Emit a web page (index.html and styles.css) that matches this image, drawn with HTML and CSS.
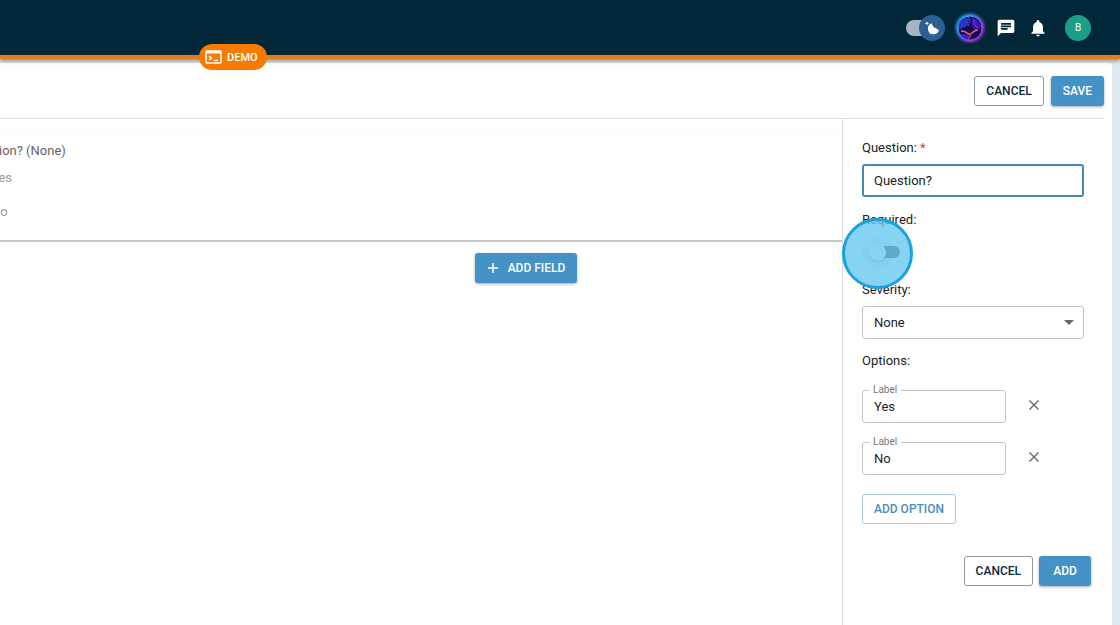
FILE: index.html
```html
<!DOCTYPE html>
<html lang="en">
<head>
  <meta charset="utf-8">
  <title>Form Builder</title>
  <link rel="stylesheet" href="styles.css">
</head>
<body>

<header class="topbar">
  <a class="demo-badge" href="#">
    <svg width="17" height="14" viewBox="0 0 17 14" fill="none" stroke="#fff" stroke-width="1.5">
      <rect x="1" y="1" width="15" height="12" rx="1"/>
      <path d="M1 2.5h15" stroke-width="2"/>
      <path d="M4 6l2.5 2L4 10M8.5 10.5H13"/>
    </svg>
    DEMO
  </a>
  <label class="theme-switch">
    <input type="checkbox" aria-label="Dark mode" checked>
    <span class="theme-thumb">
      <svg width="16" height="16" viewBox="0 0 16 16" fill="#fff">
        <path d="M8.200 3.200A5.600 5.600 0 1 0 15 9.800a2.600 2.600 0 0 1-3-2 2.600 2.600 0 0 1-3-1.800 2.600 2.600 0 0 1-.8-2.800z"/>
        <path d="M3 1.200l.6 1.600 1.600.6-1.600.6L3 5.600 2.400 4 .8 3.400l1.600-.6z"/>
      </svg>
    </span>
  </label>
  <button class="icon-btn" aria-label="Assistant">
    <svg width="36" height="36" viewBox="0 0 36 36">
      <defs>
        <linearGradient id="ring" x1="0" y1="0" x2="1" y2="1">
          <stop offset="0" stop-color="#22d3ff"/>
          <stop offset=".4" stop-color="#4a8cff"/>
          <stop offset=".7" stop-color="#c03cf0"/>
          <stop offset="1" stop-color="#8a2cf0"/>
        </linearGradient>
        <filter id="soft" x="-20%" y="-20%" width="140%" height="140%"><feGaussianBlur stdDeviation="1.500"/></filter>
        <clipPath id="orb"><circle cx="18" cy="18" r="12"/></clipPath>
      </defs>
      <circle cx="18" cy="18" r="14" fill="url(#ring)" filter="url(#soft)"/>
      <circle cx="18" cy="18" r="12" fill="#150a50" stroke="url(#ring)"/>
      <g clip-path="url(#orb)" fill="none">
        <path d="M6 12q5-6 11-3l-1 6-9 5z" fill="#2338c8"/>
        <path d="M20 8q7 1 9 9l-5 4-4-5z" fill="#3a1bb8"/>
        <path d="M10 24l8 1-2 5-6-2z" fill="#2b2ad0"/>
        <path d="M16 7q4 4 0 9M22 9q-1 6 4 9" stroke="#6a3aff"/>
        <path d="M9 21q4 0 6 2t5 0q3-3 6-3" stroke="#f0685c" stroke-width="1.500"/>
        <path d="M19 24q0 3-3 5" stroke="#d0508c"/>
      </g>
    </svg>
  </button>
  <button class="icon-btn" aria-label="Messages">
    <svg width="20" height="20" viewBox="0 0 24 24" fill="#fff"><path d="M20 2H4c-1.100 0-2 .9-2 2v18l4-4h14c1.100 0 2-.9 2-2V4c0-1.100-.9-2-2-2zM6 6h12v2H6zm0 3h12v2H6zm8 5H6v-2h8z"/></svg>
  </button>
  <button class="icon-btn" aria-label="Notifications">
    <svg width="20" height="20" viewBox="0 0 24 24" fill="#fff"><path d="M12 22c1.100 0 2-.9 2-2h-4c0 1.100.9 2 2 2zm6-6v-5c0-3.070-1.640-5.640-4.500-6.320V4c0-.83-.67-1.500-1.500-1.500s-1.500.67-1.500 1.500v.68C7.630 5.360 6 7.920 6 11v5l-2 2v1h16v-1z"/></svg>
  </button>
  <button class="avatar">B</button>
</header>

<main class="page">
  <div class="toolbar">
    <button class="btn btn-outline">CANCEL</button>
    <button class="btn btn-primary">SAVE</button>
  </div>

  <div class="editor">
    <section class="builder">
      <div class="field-preview">
        <p class="field-title">Question? (None)</p>
        <p class="field-option">Yes</p>
        <p class="field-option">No</p>
      </div>
      <div class="builder-actions">
        <button class="btn btn-primary">
          <svg width="12" height="12" viewBox="0 0 12 12" stroke="#fff" stroke-width="1.500"><path d="M6 1v10M1 6h10"/></svg>
          ADD FIELD
        </button>
      </div>
    </section>

    <form class="settings">
      <label class="field-label" for="question">Question: <span class="required">*</span></label>
      <input class="text-input focused" type="text" id="question" value="Question?">

      <label class="field-label" for="required">Required:</label>
      <div class="switch">
        <input type="checkbox" id="required">
        <span class="click-marker"></span>
      </div>

      <label class="field-label" for="severity">Severity:</label>
      <div class="select-wrap">
        <select class="text-input" id="severity">
          <option>None</option>
        </select>
        <svg class="caret" width="10" height="5" viewBox="0 0 10 5" fill="#666"><path d="M0 0h10L5 5z"/></svg>
      </div>

      <span class="field-label">Options:</span>
      <div class="option-row">
        <div class="outlined">
          <label for="option1">Label</label>
          <input class="text-input" type="text" id="option1" value="Yes">
        </div>
        <button class="remove" type="button" aria-label="Remove option">
          <svg width="12" height="12" viewBox="0 0 12 12" stroke="#666" stroke-width="1.400"><path d="M1.500 1.500l9 9M10.500 1.500l-9 9"/></svg>
        </button>
      </div>
      <div class="option-row">
        <div class="outlined">
          <label for="option2">Label</label>
          <input class="text-input" type="text" id="option2" value="No">
        </div>
        <button class="remove" type="button" aria-label="Remove option">
          <svg width="12" height="12" viewBox="0 0 12 12" stroke="#666" stroke-width="1.400"><path d="M1.500 1.500l9 9M10.500 1.500l-9 9"/></svg>
        </button>
      </div>
      <button class="btn btn-light" type="button">ADD OPTION</button>

      <div class="form-actions">
        <button class="btn btn-outline" type="button">CANCEL</button>
        <button class="btn btn-primary" type="button">ADD</button>
      </div>
    </form>
  </div>
</main>

</body>
</html>
```
FILE: styles.css
```css
* {
  box-sizing: border-box;
}
body {
  margin: 0;
  min-height: 100vh;
  display: flex;
  flex-direction: column;
  background: #e0e9f2;
  color: #222;
  font-family: Roboto, "Liberation Sans", sans-serif;
  font-size: 13px;
  overflow-x: hidden;
}
button, input, select {
  font: inherit;
  color: inherit;
}
button {
  cursor: pointer;
}

/* top bar */
.topbar {
  position: relative;
  z-index: 1;
  display: flex;
  align-items: center;
  justify-content: flex-end;
  height: 59px;
  padding-right: 29px;
  background: #012738;
  border-bottom: 4px solid #e27d1a;
  box-shadow: 0 2px 4px rgba(0, 0, 0, 0.4);
}
.demo-badge {
  position: absolute;
  left: 199px;
  top: 44px;
  display: flex;
  align-items: center;
  gap: 5px;
  height: 26px;
  padding: 0 9px 0 6px;
  border-radius: 13px;
  background: #f57c00;
  color: #fff;
  font-size: 11px;
  font-weight: 500;
  text-decoration: none;
}
.theme-switch {
  display: flex;
  align-items: center;
  margin-right: 7px;
}
.theme-switch input {
  appearance: none;
  width: 30px;
  height: 16px;
  margin: 0 -17px 0 0;
  border-radius: 8px;
  background: #a9b4c2;
}
.theme-thumb {
  position: relative;
  display: grid;
  place-items: center;
  width: 26px;
  height: 26px;
  border-radius: 50%;
  background: #2c6090;
}
.icon-btn {
  display: grid;
  place-items: center;
  min-width: 32px;
  padding: 0;
  border: 0;
  background: none;
}
.theme-switch + .icon-btn {
  margin-right: 2px;
}
.avatar {
  width: 26px;
  height: 26px;
  margin-left: 11px;
  padding: 0;
  border: 0;
  border-radius: 50%;
  background: #1a9f86;
  color: #fff;
  font-size: 10px;
}

/* buttons */
.btn {
  display: inline-flex;
  align-items: center;
  justify-content: center;
  gap: 9px;
  min-width: 52px;
  height: 30px;
  padding: 0 11px 1px;
  border: 1px solid transparent;
  border-radius: 3px;
  background: #fff;
  font-size: 12px;
  font-weight: 500;
}
.btn-outline {
  border-color: #8b99a3;
  color: #0c2a3c;
}
.btn-primary {
  background: #4592c6;
  color: #fff;
  box-shadow: 0 1px 3px rgba(0, 0, 0, 0.35);
}
.btn-light {
  border-color: #a5c9e0;
  color: #4a8db8;
}

/* page card */
.page {
  flex: 1;
  display: flex;
  flex-direction: column;
  margin: 4px 8px 0 0;
  padding-right: 8px;
  background: #fff;
  border-radius: 0 4px 0 0;
}
.toolbar {
  display: flex;
  justify-content: flex-end;
  gap: 7px;
  padding: 13px 0 12px;
  border-bottom: 1px solid #ddd;
}
.editor {
  flex: 1;
  display: flex;
}
.builder {
  flex: 1;
  min-width: 0;
}
/* the preview runs past the left edge of the window */
.field-preview {
  margin: 10px 0 0 -35px;
  padding: 11px 0 16px;
  border-top: 1px solid #fafafa;
  border-bottom: 2px solid #c8c8c8;
}
.field-preview p {
  margin: 0;
}
.field-title {
  line-height: 20px;
  color: #666;
}
.field-preview .field-option {
  margin: 10px 0 0 26px;
  line-height: 24px;
  color: #999;
}
.field-preview .field-title + .field-option {
  margin-top: 5px;
}
.builder-actions {
  display: flex;
  justify-content: center;
  padding: 11px 0 0 210px;
}

/* settings panel */
.settings {
  display: flex;
  flex-direction: column;
  align-items: flex-start;
  width: 262px;
  padding: 19px 20px 20px 19px;
  border-left: 1px solid #ddd;
}
.field-label {
  line-height: 20px;
}
.required {
  color: #e53935;
}
.text-input {
  width: 100%;
  height: 33px;
  padding: 0 11px 1px;
  border: 1px solid #c4c4c4;
  border-radius: 3px;
  background: #fff;
  outline: none;
}
.focused {
  margin: 6px 0 13px;
  padding: 0 10px 1px;
  border: 2px solid #4588b5;
}
.switch {
  position: relative;
  display: flex;
  align-items: center;
  width: 32px;
  height: 32px;
  margin: 6px 0 12px 6px;
}
.switch input {
  appearance: none;
  display: flex;
  align-items: center;
  width: 32px;
  height: 12px;
  margin: 0;
  border-radius: 6px;
  background: linear-gradient(90deg, transparent 10px, #333 10px);
}
.switch input::before {
  content: "";
  width: 17px;
  height: 17px;
  margin-left: 1px;
  border-radius: 50%;
  background: #fff;
  box-shadow: 0 1px 2px rgba(0, 0, 0, 0.4), 0 0 0 7px rgba(0, 0, 0, 0.06);
}
.click-marker {
  position: absolute;
  left: -26px;
  top: -18px;
  width: 71px;
  height: 71px;
  border: 3px solid #1ba1de;
  border-radius: 50%;
  background: rgba(105, 200, 240, 0.8);
  pointer-events: none;
}
.select-wrap {
  position: relative;
  width: 100%;
  margin: 6px 0 12px;
}
.select-wrap select {
  display: block;
  appearance: none;
}
.caret {
  position: absolute;
  right: 10px;
  top: 14px;
  pointer-events: none;
}
.option-row {
  display: flex;
  align-items: flex-start;
  gap: 17px;
  margin-top: 19px;
}
.outlined {
  position: relative;
  width: 144px;
}
.outlined label {
  position: absolute;
  left: 7px;
  top: -6px;
  padding: 0 4px;
  background: #fff;
  color: #777;
  font-size: 10px;
  line-height: 12px;
}
.outlined input {
  display: block;
}
.remove {
  display: grid;
  place-items: center;
  width: 22px;
  height: 30px;
  padding: 0;
  border: 0;
  background: none;
}
.btn-light {
  margin-top: 19px;
}
.form-actions {
  display: flex;
  align-self: flex-end;
  gap: 6px;
  margin: 32px -7px 0 0;
}
```
